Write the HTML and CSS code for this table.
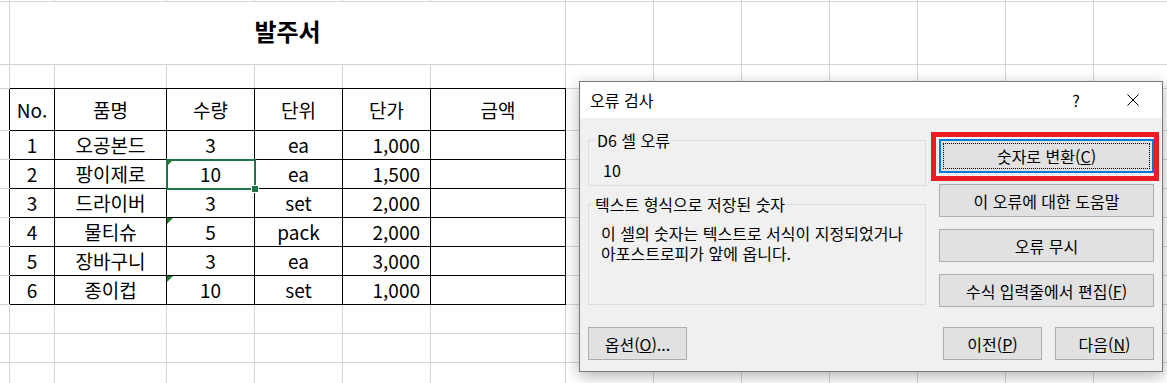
FILE: index.html
```html
<!DOCTYPE html>
<html lang="ko">
<head>
    <meta charset="UTF-8">
    <title>발주서 - 오류 검사</title>
    <link rel="stylesheet" href="styles.css">
</head>
<body>

<div class="sheet">
    <table class="grid">
        <colgroup>
            <col class="c-a"><col class="c-b"><col class="c-c"><col class="c-d"><col class="c-d"><col class="c-d"><col class="c-g">
            <col class="c-d"><col class="c-d"><col class="c-d"><col class="c-d"><col class="c-d"><col class="c-d"><col class="c-d">
        </colgroup>
        <tr class="r-1">
            <td></td><td></td><td></td><td></td><td></td><td></td><td></td>
            <td></td><td></td><td></td><td></td><td></td><td></td><td></td>
        </tr>
        <tr class="r-title">
            <td></td>
            <td colspan="6" class="title">발주서</td>
            <td></td><td></td><td></td><td></td><td></td><td></td><td></td>
        </tr>
        <tr class="r-gap">
            <td></td>
            <td class="top-edge"></td><td class="top-edge"></td><td class="top-edge"></td><td class="top-edge"></td><td class="top-edge"></td><td class="top-edge"></td>
            <td></td><td></td><td></td><td></td><td></td><td></td><td></td>
        </tr>
        <tr class="r-head">
            <td class="left-edge"></td>
            <td class="o">No.</td><td class="o">품명</td><td class="o">수량</td><td class="o">단위</td><td class="o">단가</td><td class="o">금액</td>
            <td></td><td></td><td></td><td></td><td></td><td></td><td></td>
        </tr>
        <tr>
            <td class="left-edge"></td>
            <td class="o">1</td><td class="o">오공본드</td><td class="o">3</td><td class="o">ea</td><td class="o num">1,000</td><td class="o"></td>
            <td></td><td></td><td></td><td></td><td></td><td></td><td></td>
        </tr>
        <tr>
            <td class="left-edge"></td>
            <td class="o">2</td><td class="o">팡이제로</td><td class="o err sel">10<span class="handle"></span></td><td class="o">ea</td><td class="o num">1,500</td><td class="o"></td>
            <td></td><td></td><td></td><td></td><td></td><td></td><td></td>
        </tr>
        <tr>
            <td class="left-edge"></td>
            <td class="o">3</td><td class="o">드라이버</td><td class="o">3</td><td class="o">set</td><td class="o num">2,000</td><td class="o"></td>
            <td></td><td></td><td></td><td></td><td></td><td></td><td></td>
        </tr>
        <tr>
            <td class="left-edge"></td>
            <td class="o">4</td><td class="o">물티슈</td><td class="o err">5</td><td class="o">pack</td><td class="o num">2,000</td><td class="o"></td>
            <td></td><td></td><td></td><td></td><td></td><td></td><td></td>
        </tr>
        <tr>
            <td class="left-edge"></td>
            <td class="o">5</td><td class="o">장바구니</td><td class="o">3</td><td class="o">ea</td><td class="o num">3,000</td><td class="o"></td>
            <td></td><td></td><td></td><td></td><td></td><td></td><td></td>
        </tr>
        <tr>
            <td class="left-edge"></td>
            <td class="o">6</td><td class="o">종이컵</td><td class="o err">10</td><td class="o">set</td><td class="o num">1,000</td><td class="o"></td>
            <td></td><td></td><td></td><td></td><td></td><td></td><td></td>
        </tr>
        <tr>
            <td></td><td></td><td></td><td></td><td></td><td></td><td></td>
            <td></td><td></td><td></td><td></td><td></td><td></td><td></td>
        </tr>
        <tr>
            <td></td><td></td><td></td><td></td><td></td><td></td><td></td>
            <td></td><td></td><td></td><td></td><td></td><td></td><td></td>
        </tr>
        <tr>
            <td></td><td></td><td></td><td></td><td></td><td></td><td></td>
            <td></td><td></td><td></td><td></td><td></td><td></td><td></td>
        </tr>
    </table>
</div>

<div class="dialog">
    <div class="dlg-title">
        <span class="dlg-caption">오류 검사</span>
        <span class="dlg-help">?</span>
        <span class="dlg-close">
            <svg width="12" height="12" viewBox="0 0 12 12"><path d="M0.5 0.5L11.5 11.5M11.5 0.5L0.5 11.5" stroke="#000" stroke-width="1" fill="none"/></svg>
        </span>
    </div>
    <div class="dlg-body">
        <div class="dlg-main">
            <div class="dlg-left">
                <fieldset class="group group-cell">
                    <legend>D6 셀 오류</legend>
                    <div>10</div>
                </fieldset>
                <fieldset class="group group-desc">
                    <legend>텍스트 형식으로 저장된 숫자</legend>
                    <p>이 셀의 숫자는 텍스트로 서식이 지정되었거나</p>
                    <p>아포스트로피가 앞에 옵니다.</p>
                </fieldset>
            </div>
            <div class="dlg-actions">
                <button class="btn btn-default">숫자로 변환(<u>C</u>)</button>
                <button class="btn">이 오류에 대한 도움말</button>
                <button class="btn">오류 무시</button>
                <button class="btn">수식 입력줄에서 편집(<u>F</u>)</button>
            </div>
        </div>
        <div class="dlg-foot">
            <button class="btn btn-small">옵션(<u>O</u>)...</button>
            <div class="dlg-nav">
                <button class="btn btn-small">이전(<u>P</u>)</button>
                <button class="btn btn-small">다음(<u>N</u>)</button>
            </div>
        </div>
    </div>
    <!-- red marker drawn around the convert button -->
    <div class="mark"></div>
</div>

</body>
</html>
```

FILE: styles.css
```css
body {
    margin: 0;
    width: 1167px;
    height: 383px;
    overflow: hidden;
    background: #fff;
    color: #000;
    font-family: "Noto Sans CJK KR", "Noto Sans", sans-serif;
}

/* worksheet */
.sheet {
    height: 383px;
    overflow: hidden;
}
.grid {
    border-collapse: collapse;
    table-layout: fixed;
    width: 1193px;
    margin: -12px 0 0 -12px;
    font-size: 19px;
    line-height: 20px;
}
.c-a { width: 21px; }
.c-b { width: 45px; }
.c-c { width: 112px; }
.c-d { width: 88px; }
.c-g { width: 135px; }
.grid tr { height: 29px; }
.grid tr.r-1 { height: 13px; }
.grid tr.r-title { height: 63px; }
.grid tr.r-gap { height: 24px; }
.grid tr.r-head { height: 42px; }
.grid td {
    border: 1px solid #d4d4d4;
    padding: 0;
    text-align: center;
    white-space: nowrap;
    position: relative;
}
.grid td.title {
    font-size: 24px;
    font-weight: bold;
    padding-bottom: 5px;
}
.grid td.o {
    border-color: #000;
}
.grid td.top-edge {
    border-bottom-color: #000;
}
.grid td.left-edge {
    border-right-color: #000;
}
.grid td.num {
    text-align: right;
    padding-right: 10px;
}
/* green "number stored as text" marker */
.grid td.err::before {
    content: "";
    position: absolute;
    top: 0;
    left: 0;
    border-top: 6px solid #1d7b2f;
    border-right: 6px solid transparent;
}
.grid td.sel::after {
    content: "";
    position: absolute;
    top: -1px;
    left: -1px;
    right: -2px;
    bottom: -2px;
    border: 2px solid #217346;
}
.handle {
    position: absolute;
    right: -5px;
    bottom: -5px;
    width: 6px;
    height: 6px;
    background: #217346;
    border: 1px solid #fff;
    z-index: 1;
}

/* error check dialog */
.dialog {
    position: absolute;
    left: 579px;
    top: 81px;
    width: 582px;
    height: 289px;
    border: 1px solid #7a7a7a;
    background: #f0f0f0;
    box-shadow: 0 4px 14px rgba(0, 0, 0, 0.3);
    font-size: 16px;
    line-height: 20px;
}
.dlg-title {
    height: 36px;
    background: #fff;
    display: flex;
    align-items: center;
}
.dlg-caption {
    padding-left: 10px;
}
.dlg-help {
    margin-left: auto;
    margin-right: 25px;
    width: 24px;
    text-align: center;
}
.dlg-close {
    width: 40px;
    margin-right: 9px;
    display: flex;
    justify-content: center;
}
.dlg-body {
    height: 253px;
    box-sizing: border-box;
    padding: 12px 8px 11px;
    display: flex;
    flex-direction: column;
}
.dlg-main {
    display: flex;
    gap: 13px;
}
.dlg-left {
    width: 338px;
}
.group {
    margin: 0;
    min-width: 0;
    border: 1px solid #dcdcdc;
}
.group legend {
    margin-left: -8px;
    padding: 0 2px;
}
.group-cell {
    padding: 10px 14px 5px;
}
.group-desc {
    margin-top: 8px;
    padding: 9px 12px 41px;
}
.group-desc p {
    margin: 0;
    line-height: 20px;
}
.dlg-actions {
    width: 215px;
    padding-top: 9px;
}
.btn {
    box-sizing: border-box;
    height: 33px;
    padding: 0;
    background: #e1e1e1;
    border: 1px solid #adadad;
    font-family: inherit;
    font-size: 16px;
    color: #000;
}
.dlg-actions .btn {
    display: block;
    width: 100%;
    margin-bottom: 12px;
}
.dlg-actions .btn-default {
    height: 34px;
    margin-bottom: 11px;
    border: 2px solid #0078d7;
    outline: 1px dotted #000;
    outline-offset: -5px;
}
.btn-small {
    width: 99px;
}
.dlg-foot {
    margin-top: auto;
    display: flex;
    justify-content: space-between;
}
.dlg-nav {
    display: flex;
    gap: 13px;
}
.mark {
    position: absolute;
    left: 351px;
    top: 50px;
    width: 228px;
    height: 49px;
    box-sizing: border-box;
    border: 5px solid #ed1c24;
}
```
